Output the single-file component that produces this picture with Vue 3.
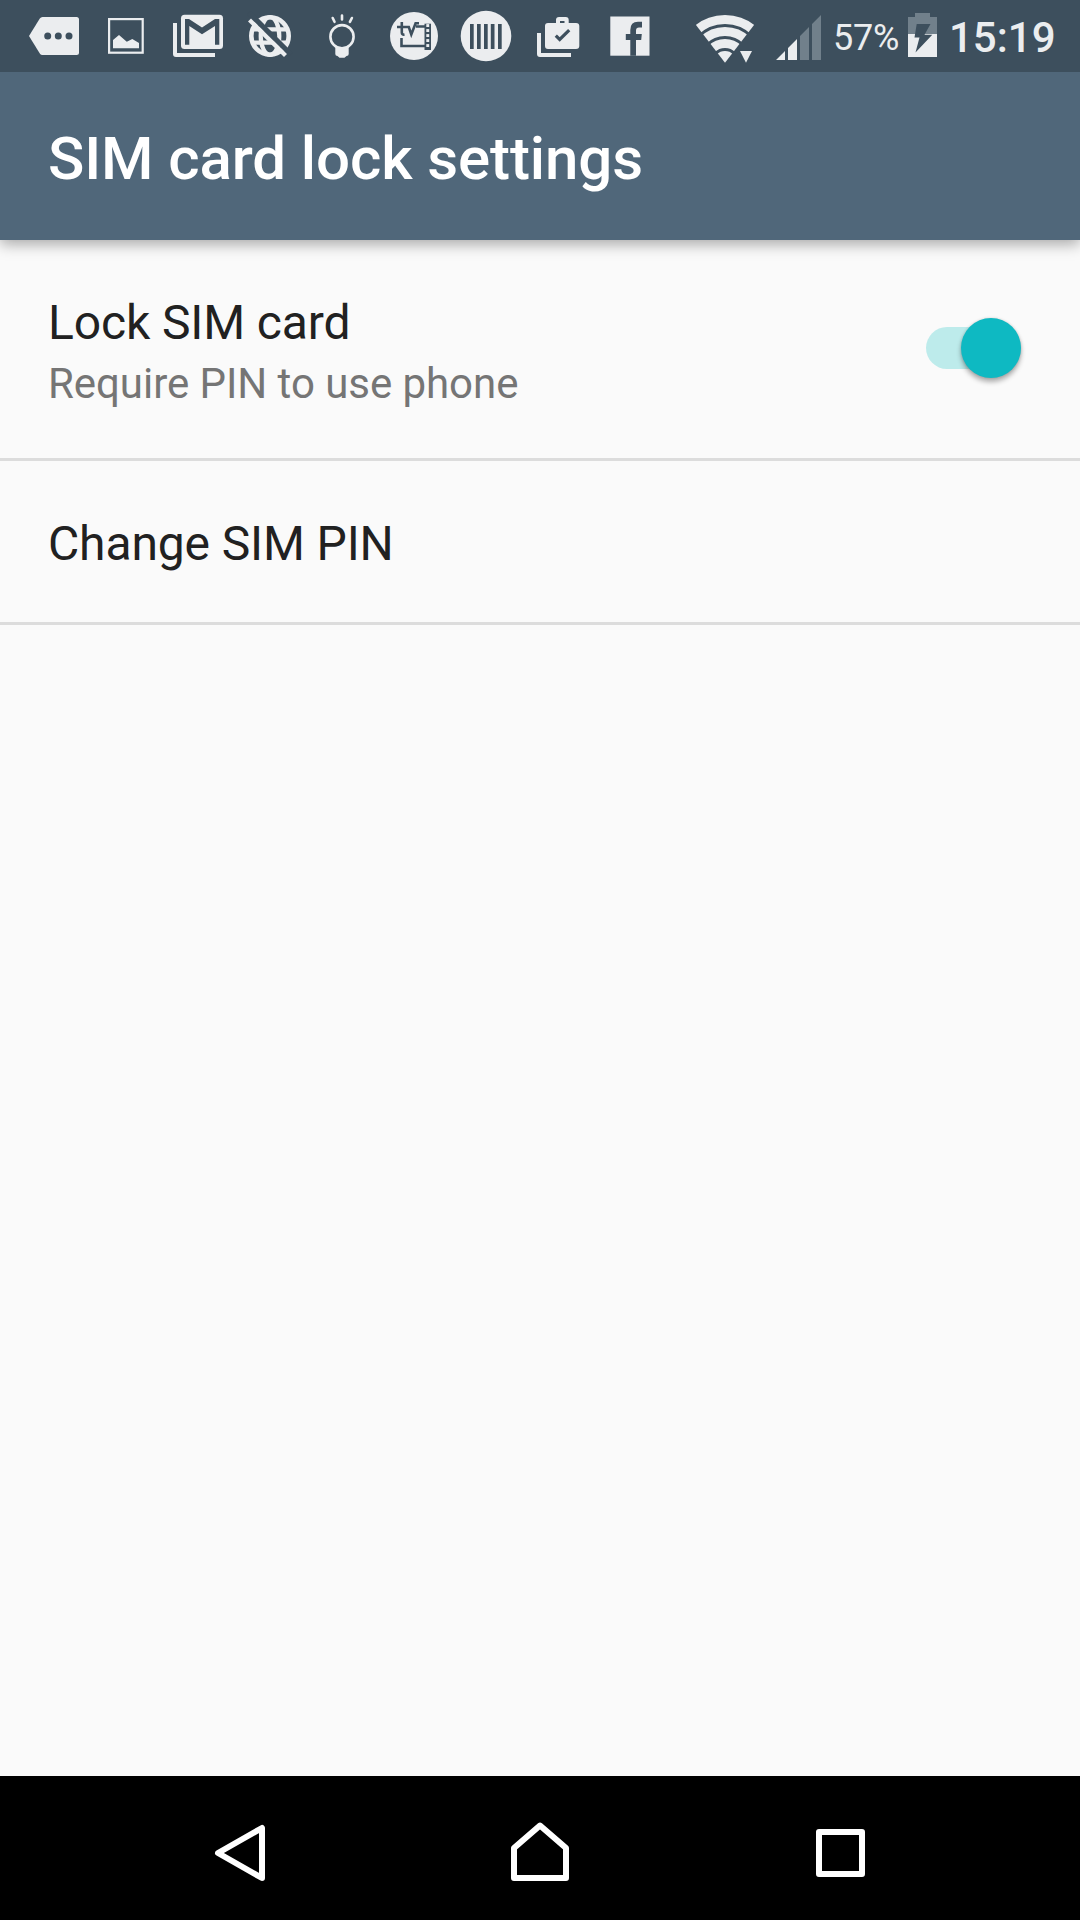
<script setup>
import { ref } from 'vue'

const locked = ref(true)
const barcode = [20, 27, 34, 40.8, 48]
const rungs = [25.5, 30.5, 35.5, 40.5, 45.5]
</script>

<template>
  <div class="screen">
    <header class="status">
      <div class="notifications">
        <svg class="cell" viewBox="0 0 72 72">
          <path class="fg" d="M11 36 21.8 18.6Q22.8 17 24.5 17H58.5Q61 17 61 19.500V52.500Q61 55 58.500 55H24.500Q22.800 55 21.800 53.400Z" />
          <circle class="bg" cx="29.700" cy="36" r="3.500" />
          <circle class="bg" cx="40.300" cy="36" r="3.500" />
          <circle class="bg" cx="51" cy="36" r="3.500" />
        </svg>
        <svg class="cell" viewBox="0 0 72 72">
          <rect class="line" x="19.100" y="19.100" width="33.600" height="33.600" stroke-width="2.200" />
          <path class="fg" d="M23 40 29 35 36.800 41.800 42.300 39 49 43V48.300H23Z" />
        </svg>
        <svg class="cell" viewBox="0 0 72 72">
          <path class="fg" d="M11 23H15V53H53V57H14Q11 57 11 54Z" />
          <rect class="fg" x="19" y="14.700" width="42" height="34.300" rx="3.500" />
          <path class="bg" d="M23 19H27L40 27.500 53 19H57.300V44.800H53V26L40 34.300 27.300 26V44.800H23Z" />
        </svg>
        <svg class="cell" viewBox="0 0 72 72">
          <circle class="line" cx="36" cy="36" r="18.700" stroke-width="4.600" />
          <ellipse class="line" cx="36" cy="36" rx="9.300" ry="18.800" stroke-width="4.200" />
          <path class="line" d="M18 29.300H54M18 42.700H54" stroke-width="4.200" />
          <path class="dark" d="M15 12.700 57 54.700" stroke-width="5.200" />
          <path class="line" d="M15.500 20 51.500 55.500" stroke-width="4.200" />
        </svg>
        <svg class="cell" viewBox="0 0 72 72">
          <circle class="line" cx="36" cy="36.700" r="11.600" stroke-width="2.600" />
          <path class="fg" d="M29.300 46.500Q36 50.500 42.700 46.500V54Q42.700 56 40.500 56L38.500 57.800H33.500L31.500 56Q29.300 56 29.300 54Z" />
          <path class="line round" d="M36 15.500V19.500M26.700 18 28.500 21.800M45.900 18 43.900 21.800" stroke-width="2.600" />
        </svg>
        <svg class="cell" viewBox="0 0 72 72">
          <circle class="fg" cx="36" cy="36" r="24" />
          <path class="dark" d="M19 27H29M23.800 22V32.500Q23.800 35 26.500 34.500M28.500 27H30.800L33.300 34.500 37.600 23.300H41M38 26.500H48M23.500 38V46H48" stroke-width="2.600" />
          <rect class="bg" x="46.500" y="23.700" width="6.500" height="26.300" />
          <rect v-for="y in rungs" :key="y" class="fg" x="48.300" :y="y - 1.400" width="2.900" height="2.900" />
        </svg>
        <svg class="cell" viewBox="0 0 72 72">
          <circle class="fg" cx="36" cy="36" r="25.300" />
          <rect v-for="x in barcode" :key="x" class="bg" :x="x" y="24" width="3.700" height="25" />
        </svg>
        <svg class="cell" viewBox="0 0 72 72">
          <path class="fg" d="M15 33H19V53H49V57H18Q15 57 15 54Z" />
          <path class="fg" fill-rule="evenodd" d="M26 23H34V20Q34 17 37 17H43.700Q46.700 17 46.700 20V23H54Q57.300 23 57.300 26V46Q57.300 49 54 49H26Q23 49 23 46V26Q23 23 26 23ZM38 21V23H42.500V21Z" />
          <path class="dark" d="M33.800 35.700 37.700 39.500 47.200 30.200" stroke-width="3.200" />
        </svg>
        <svg class="cell" viewBox="0 0 72 72">
          <rect class="fg" x="16.300" y="16.500" width="39.200" height="39.200" />
          <path class="bg" d="M36.300 55.700V40H31.800V34H36.300V30Q36.300 21.800 44 21.800H48V27.600H45Q42 27.600 42 30.500V34H47.800L47.200 40H42V55.700Z" />
        </svg>
      </div>
      <div class="system">
        <svg class="wifi" viewBox="0 0 60 72">
          <defs>
            <clipPath id="fan"><path d="M30 62.700-8 13.300V0H68V13.300Z" /></clipPath>
          </defs>
          <g clip-path="url(#fan)">
            <circle class="line" cx="30" cy="62.700" r="43.200" stroke-width="9" />
            <circle class="line" cx="30" cy="62.700" r="31.200" stroke-width="9" />
            <circle class="line" cx="30" cy="62.700" r="19.200" stroke-width="9" />
            <circle class="fg" cx="30" cy="62.700" r="11.700" />
          </g>
          <path class="fg" d="M45 51H57L51 62.700Z" />
        </svg>
        <svg class="signal" viewBox="0 0 45 72">
          <path class="fg" d="M0 60 9 51V60ZM12 48 21 39V60H12Z" />
          <path class="dim" d="M24 36 33 27V60H24ZM36 24 45 15V60H36Z" />
        </svg>
        <span class="percent">57%</span>
        <svg class="battery" viewBox="0 0 29 72">
          <path class="dim" d="M0 17H7V13H22V17H29V34H0Z" />
          <rect class="fg" y="34" width="29" height="23" />
          <path class="bg" d="M8.700 24H22.500L16.500 34.800H24.300L7.500 52.500 11.500 37.500H6.500Z" />
        </svg>
        <span class="clock">15:19</span>
      </div>
    </header>

    <div class="appbar"><h1>SIM card lock settings</h1></div>

    <main>
      <section class="row tall">
        <div class="labels">
          <div class="title">Lock SIM card</div>
          <div class="summary">Require PIN to use phone</div>
        </div>
        <button class="switch" :class="{ on: locked }" aria-label="Lock SIM card" @click="locked = !locked">
          <span class="thumb"></span>
        </button>
      </section>
      <section class="row short">
        <div class="title">Change SIM PIN</div>
      </section>
    </main>

    <nav>
      <svg viewBox="0 0 72 72"><path d="M14 37 58 12V62Z" transform="translate(0 -1)" /></svg>
      <svg viewBox="0 0 72 72"><path d="M10 31 36 8.500 62 31V61H10Z" /></svg>
      <svg viewBox="0 0 72 72"><rect x="15" y="15" width="43" height="42" /></svg>
    </nav>
  </div>
</template>

<style>
body { margin: 0; }
</style>

<style scoped>
.screen {
  width: 1080px;
  height: 1920px;
  display: flex;
  flex-direction: column;
  overflow: hidden;
  background: #fafafa;
  color: #212121;
  font-family: Roboto, sans-serif;
}
.status {
  position: relative;
  z-index: 1;
  height: 72px;
  display: flex;
  justify-content: space-between;
  box-sizing: border-box;
  padding: 0 26px 0 18px;
  background: #3d4f5d;
  color: #ebedef;
}
.notifications, .system { display: flex; }
.cell { width: 72px; height: 72px; }
.fg { fill: #ebedef; }
.bg { fill: #3d4f5d; }
.dim { fill: #71808b; }
.line { fill: none; stroke: #ebedef; }
.dark { fill: none; stroke: #3d4f5d; }
.round { stroke-linecap: round; }
.system svg { height: 72px; }
.wifi { width: 60px; margin-right: 21px; }
.signal { width: 45px; }
.percent {
  width: 66px;
  margin: 0 9px 0 12px;
  font-size: 36px;
  line-height: 76px;
  letter-spacing: -0.2px;
  white-space: nowrap;
}
.battery { width: 29px; }
.clock {
  width: 105px;
  margin-left: 12px;
  font-size: 42px;
  font-weight: 500;
  line-height: 76px;
  white-space: nowrap;
}
.appbar {
  height: 168px;
  display: flex;
  align-items: center;
  box-sizing: border-box;
  padding: 5px 48px 0;
  background: #50677a;
  color: #fff;
  position: relative;
  box-shadow: 0 4px 14px rgba(0, 0, 0, 0.34);
}
h1 {
  margin: 0;
  font-size: 60px;
  font-weight: 500;
  line-height: 70px;
  letter-spacing: -0.1px;
}
main { flex: 1; }
.row {
  display: flex;
  align-items: center;
  justify-content: space-between;
  box-sizing: border-box;
  padding: 0 59px 0 48px;
  border-bottom: 3px solid #dcdcdc;
}
.tall { height: 221px; }
.short { height: 164px; padding-top: 4px; }
.labels { padding-top: 5px; }
.title { font-size: 48px; line-height: 58px; letter-spacing: -0.13px; }
.summary {
  margin-top: 7px;
  font-size: 42px;
  line-height: 50px;
  letter-spacing: -0.05px;
  color: #757575;
}
.switch {
  width: 95px;
  height: 42px;
  display: flex;
  align-items: center;
  margin-bottom: 2px;
  padding: 0;
  border: 0;
  border-radius: 21px;
  background: #c8c8c8;
}
.thumb {
  width: 60px;
  height: 60px;
  flex: none;
  border-radius: 50%;
  background: #f1f1f1;
  box-shadow: 0 4px 5px rgba(0, 0, 0, 0.3), 0 0 3px rgba(0, 0, 0, 0.15);
}
.on { justify-content: flex-end; background: #bdebeb; }
.on .thumb { background: #0eb9c2; }
nav {
  height: 144px;
  display: flex;
  justify-content: center;
  align-items: center;
  gap: 228px;
  padding-top: 9px;
  box-sizing: border-box;
  background: #000;
}
nav svg {
  width: 72px;
  height: 72px;
  fill: none;
  stroke: #fff;
  stroke-width: 6;
  stroke-linejoin: round;
}
</style>
